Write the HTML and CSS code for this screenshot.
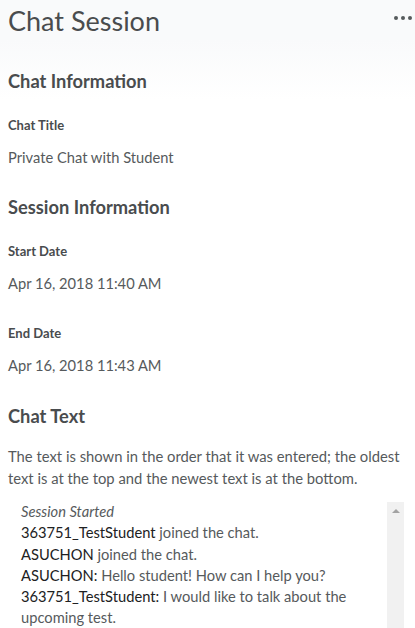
FILE: index.html
```html
<!DOCTYPE html>
<html lang="en">
<head>
<meta charset="utf-8">
<title>Chat Session</title>
<link rel="stylesheet" href="styles.css">
</head>
<body>
<div class="page">
  <header class="topbar">
    <h1 class="page-title">Chat Session</h1>
    <button class="more" aria-label="More actions">
      <span class="dot"></span><span class="dot"></span><span class="dot"></span>
    </button>
  </header>

  <section class="section">
    <h2 class="section-title">Chat Information</h2>
    <div class="field">
      <div class="label">Chat Title</div>
      <div class="value">Private Chat with Student</div>
    </div>
  </section>

  <section class="section">
    <h2 class="section-title">Session Information</h2>
    <div class="field">
      <div class="label">Start Date</div>
      <div class="value">Apr 16, 2018 11:40 AM</div>
    </div>
    <div class="field">
      <div class="label">End Date</div>
      <div class="value">Apr 16, 2018 11:43 AM</div>
    </div>
  </section>

  <section class="section section-chat">
    <h2 class="section-title">Chat Text</h2>
    <p class="desc">The text is shown in the order that it was entered; the oldest text is at the top and the newest text is at the bottom.</p>
    <div class="chatbox">
      <div class="chatlog">
        <div class="line system">Session Started</div>
        <div class="line"><span class="who">363751_TestStudent</span> joined the chat.</div>
        <div class="line"><span class="who">ASUCHON</span> joined the chat.</div>
        <div class="line"><span class="who">ASUCHON:</span> Hello student! How can I help you?</div>
        <div class="line"><span class="who">363751_TestStudent:</span> <span class="msg">I would like to talk about the upcoming test.</span></div>
      </div>
      <div class="scrollbar"><span class="arrow-up"></span></div>
    </div>
  </section>
</div>
</body>
</html>
```

FILE: styles.css
```css
html, body {
  margin: 0;
  padding: 0;
  background: #ffffff;
}
body {
  font-family: Lato, "Open Sans", sans-serif;
  color: #565a5c;
}
.page {
  background: linear-gradient(to bottom, #f9fafb 0px, #f9fafb 40px, #ffffff 100px);
  padding: 0 8px;
}
.topbar {
  display: flex;
  align-items: center;
  justify-content: space-between;
  height: 41px;
}
.page-title {
  margin: 0;
  font-size: 27px;
  font-weight: 400;
  color: #494c4e;
  line-height: 36px;
}
.more {
  display: flex;
  gap: 3px;
  border: 0;
  background: transparent;
  padding: 0;
  margin-right: -5px;
  margin-top: -6px;
}
.dot {
  width: 4px;
  height: 4px;
  border-radius: 50%;
  background: #565a5c;
}
.section {
  padding-top: 28px;
}
.section-chat {
  padding-top: 29px;
}
.section-title {
  margin: 0;
  font-size: 18.3px;
  font-weight: 700;
  color: #494c4e;
  line-height: 24px;
}
.field {
  margin-top: 23px;
}
.field + .field {
  margin-top: 31px;
}
.label {
  font-size: 13px;
  font-weight: 700;
  color: #494c4e;
  line-height: 18px;
}
.value {
  margin-top: 13px;
  font-size: 14.7px;
  line-height: 20px;
  color: #565a5c;
}
.desc {
  margin: 17px 0 0;
  font-size: 14.8px;
  line-height: 22px;
  color: #565a5c;
}
.chatbox {
  display: flex;
  margin-top: 13px;
  height: 130px;
}
.chatlog {
  flex: 1;
  margin-top: -1px;
  padding: 0 14px 0 13px;
  font-size: 14.7px;
  line-height: 21.3px;
  color: #565a5c;
}
.system {
  font-style: italic;
  color: #565a5c;
}
.who {
  color: #202122;
}
.scrollbar {
  width: 17px;
  margin-right: 3px;
  background: #f1f1f1;
  display: flex;
  justify-content: center;
  padding-top: 7px;
  box-sizing: border-box;
}
.arrow-up {
  width: 0;
  height: 0;
  border-left: 4px solid transparent;
  border-right: 4px solid transparent;
  border-bottom: 4px solid #a3a3a3;
}
```
